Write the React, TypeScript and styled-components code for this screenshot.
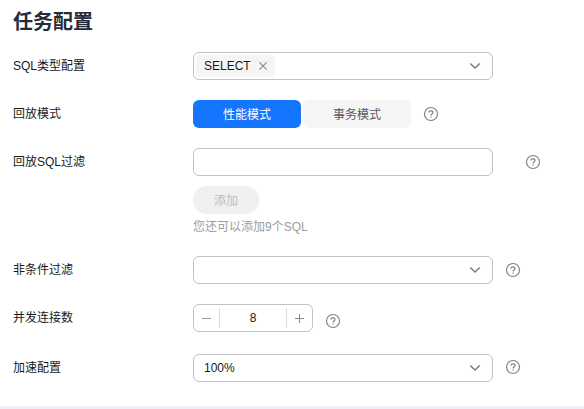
import React from "react";
import styled, { createGlobalStyle } from "styled-components";

const GlobalStyle = createGlobalStyle`
  * { box-sizing: border-box; }
  body {
    margin: 0;
    background: #fff;
    color: #191919;
    font: 12px/18px "Liberation Sans", "Noto Sans CJK SC", sans-serif;
  }
`;

const Page = styled.main`
  display: flex;
  flex-direction: column;
  height: 409px;
  overflow: hidden;
  border-bottom: 3px solid #eeeff6;
`;

const Title = styled.h1`
  margin: 7px 0 15px 13px;
  font-size: 20px;
  line-height: 30px;
  font-weight: 700;
  color: #252b3a;
`;

const Row = styled.div<{ $gap?: number }>`
  display: flex;
  align-items: flex-start;
  padding-left: 13px;
  margin-bottom: ${(p) => p.$gap ?? 20}px;
`;

const Label = styled.label`
  flex: 0 0 180px;
  line-height: 28px;
  white-space: nowrap;
`;

const Field = styled.div`
  display: flex;
  flex-direction: column;
  align-items: flex-start;
`;

const Box = styled.div`
  display: flex;
  align-items: center;
  width: 300px;
  height: 28px;
  border: 1px solid #c2c2c2;
  border-radius: 6px;
  background: #fff;
`;

const TextInput = styled.input`
  width: 300px;
  height: 28px;
  padding: 0 10px;
  border: 1px solid #c2c2c2;
  border-radius: 6px;
  outline: none;
  font: inherit;
`;

const Value = styled.span`
  padding-left: 10px;
`;

const Chevron = styled.svg`
  width: 12px;
  height: 8px;
  margin: 0 11px 0 auto;
`;

const Tag = styled.span`
  display: flex;
  align-items: center;
  justify-content: space-between;
  width: 79px;
  height: 22px;
  margin-left: 2px;
  padding: 0 8px;
  border-radius: 4px;
  background: #f5f5f5;
`;

const Segments = styled.div`
  display: flex;
  gap: 2px;
`;

const Segment = styled.button<{ $active?: boolean }>`
  width: 108px;
  height: 28px;
  padding: 2px 0 0;
  border: 0;
  border-radius: 6px;
  font: inherit;
  background: ${(p) => (p.$active ? "#1476ff" : "#f5f5f5")};
  color: ${(p) => (p.$active ? "#fff" : "#595959")};
`;

const AddButton = styled.button`
  width: 66px;
  height: 28px;
  margin-top: 10px;
  padding: 2px 0 0;
  border: 0;
  border-radius: 14px;
  background: #f0f0f0;
  color: #bdbdbd;
  font: inherit;
`;

const Hint = styled.p`
  margin: 4px 0 0;
  color: #9a9ba3;
`;

const Stepper = styled.div`
  display: flex;
  align-items: center;
  width: 120px;
  height: 28px;
  border: 1px solid #c2c2c2;
  border-radius: 6px;
`;

const StepButton = styled.button`
  display: flex;
  align-items: center;
  justify-content: center;
  width: 25px;
  height: 20px;
  padding: 0;
  border: 0;
  background: none;
`;

const Count = styled.span`
  flex: 1;
  height: 20px;
  border: solid #dcdcdc;
  border-width: 0 1px;
  line-height: 20px;
  text-align: center;
`;

const HelpIcon = styled.svg<{ $left: number; $top?: number }>`
  flex: none;
  width: 16px;
  height: 16px;
  margin: ${(p) => p.$top ?? 6}px 0 0 ${(p) => p.$left}px;
`;

function Help({ left, top }: { left: number; top?: number }) {
  return (
    <HelpIcon $left={left} $top={top} viewBox="0 0 16 16" fill="none" stroke="#85807f">
      <circle cx="8" cy="8" r="6.5" strokeWidth="1.15" />
      <path d="M6 6.5C6 5.4 6.9 4.8 8 4.8s2 .6 2 1.7C10 7.8 8.1 7.9 8.1 9.5" strokeWidth="1.2" />
      <path d="M8.1 10.4v1.2" strokeWidth="1.3" />
    </HelpIcon>
  );
}

function Arrow() {
  return (
    <Chevron viewBox="0 0 12 8" fill="none" stroke="#777" strokeWidth="1.4">
      <path d="M1.3 1.6 6 6l4.7-4.4" />
    </Chevron>
  );
}

export default function App() {
  return (
    <>
      <GlobalStyle />
      <Page>
        <Title>任务配置</Title>
        <Row>
          <Label>SQL类型配置</Label>
          <Box>
            <Tag>
              SELECT
              <svg width="8" height="8" viewBox="0 0 8 8" stroke="#858990" strokeWidth="1.1">
                <path d="M.4.4l7.2 7.2M7.6.4.4 7.6" />
              </svg>
            </Tag>
            <Arrow />
          </Box>
        </Row>
        <Row>
          <Label>回放模式</Label>
          <Segments>
            <Segment $active>性能模式</Segment>
            <Segment>事务模式</Segment>
          </Segments>
          <Help left={12} />
        </Row>
        <Row>
          <Label>回放SQL过滤</Label>
          <Field>
            <TextInput />
            <AddButton disabled>添加</AddButton>
            <Hint>您还可以添加9个SQL</Hint>
          </Field>
          <Help left={32} />
        </Row>
        <Row>
          <Label>非条件过滤</Label>
          <Box>
            <Arrow />
          </Box>
          <Help left={12} />
        </Row>
        <Row $gap={22}>
          <Label>并发连接数</Label>
          <Stepper>
            <StepButton aria-label="减少">
              <svg width="9" height="9" viewBox="0 0 9 9" stroke="#999">
                <path d="M0 4.5h9" />
              </svg>
            </StepButton>
            <Count>8</Count>
            <StepButton aria-label="增加">
              <svg width="9" height="9" viewBox="0 0 9 9" stroke="#858990">
                <path d="M0 4.5h9M4.5 0v9" />
              </svg>
            </StepButton>
          </Stepper>
          <Help left={12} top={9} />
        </Row>
        <Row $gap={0}>
          <Label>加速配置</Label>
          <Box>
            <Value>100%</Value>
            <Arrow />
          </Box>
          <Help left={12} top={5} />
        </Row>
      </Page>
    </>
  );
}
